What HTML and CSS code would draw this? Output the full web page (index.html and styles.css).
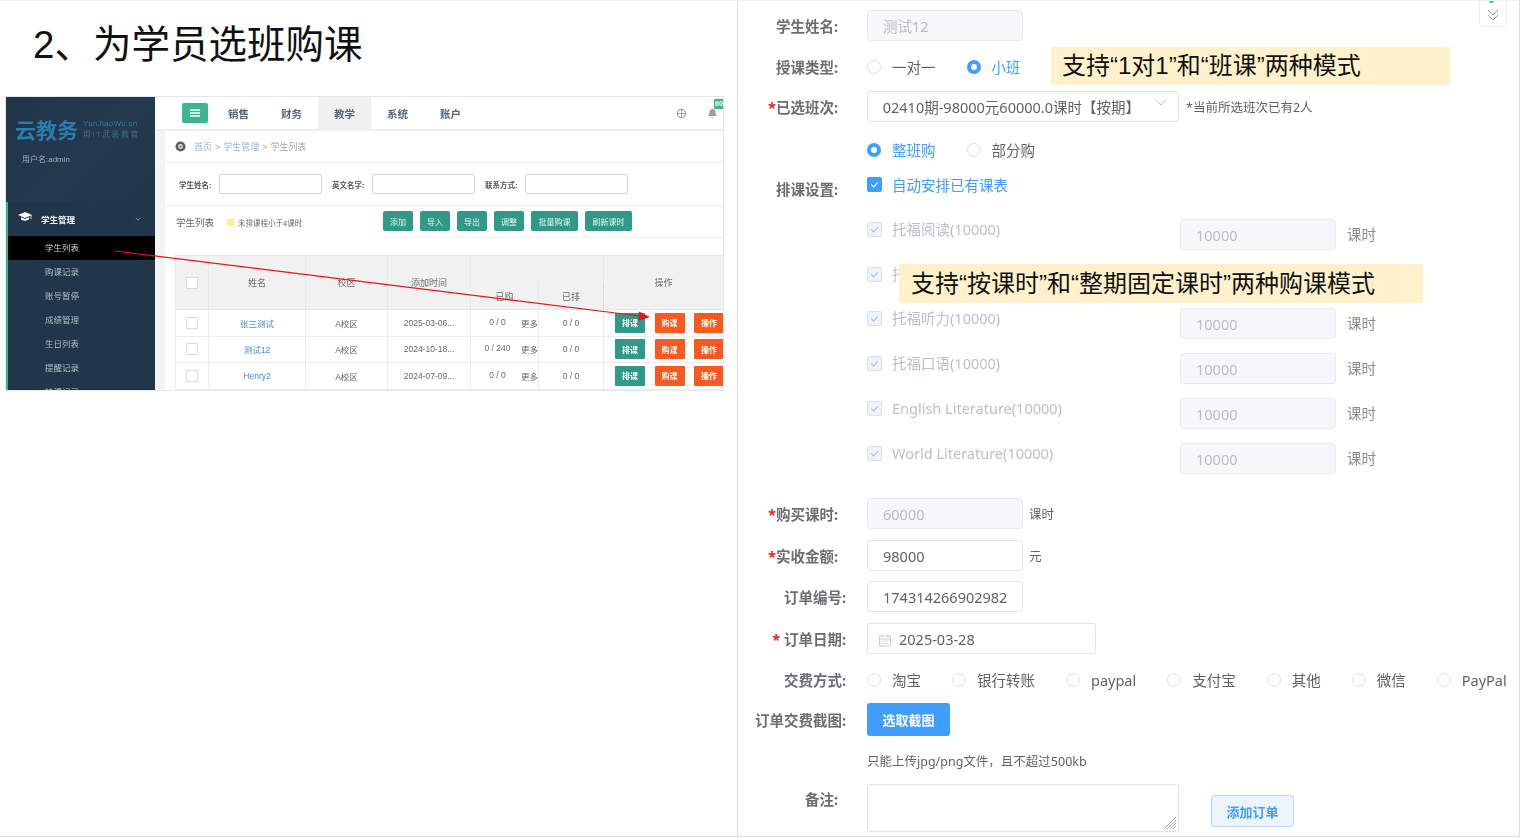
FILE: index.html
```html
<!DOCTYPE html>
<html lang="zh-CN">
<head>
<meta charset="utf-8">
<title>为学员选班购课</title>
<link rel="stylesheet" href="styles.css">
</head>
<body>
<div class="slide">
  <section class="left">
    <h1 class="title">2、为学员选班购课</h1>
    <div class="shot">
      <aside class="side">
        <div class="brand">
          <div class="logo">
            <span class="logo-main">云教务</span>
            <span class="logo-sub"><span class="logo-url">YunJiaoWu.cn</span><span class="logo-slogan">用IT武装教育</span></span>
          </div>
          <div class="user">用户名:admin</div>
        </div>
        <div class="menu">
          <div class="menu-head">
            <svg class="cap" viewBox="0 0 14 10"><path d="M0 3 7 0l7 3-7 3z" fill="#fff"/><path d="M3 5.2v2.4c2 1.4 6 1.4 8 0V5.2L7 7z" fill="#fff"/><path d="M13 3v4" stroke="#fff" stroke-width=".8"/></svg>
            <span class="menu-title">学生管理</span>
            <svg class="chev" viewBox="0 0 8 5"><path d="M1 1l3 3 3-3" fill="none" stroke="#9fb0bd" stroke-width="1"/></svg>
          </div>
          <div class="menu-item active">学生列表</div>
          <div class="menu-item">购课记录</div>
          <div class="menu-item">账号暂停</div>
          <div class="menu-item">成绩管理</div>
          <div class="menu-item">生日列表</div>
          <div class="menu-item">提醒记录</div>
          <div class="menu-item">转课记录</div>
        </div>
      </aside>
      <div class="main">
        <nav class="nav">
          <span class="burger"><svg viewBox="0 0 10 8" width="10" height="8"><path d="M0 1h10M0 4h10M0 7h10" stroke="#fff" stroke-width="1.3"/></svg></span>
          <span class="tab">销售</span>
          <span class="tab">财务</span>
          <span class="tab current">教学</span>
          <span class="tab">系统</span>
          <span class="tab">账户</span>
          <span class="nav-tools">
            <svg class="globe" viewBox="0 0 12 12"><circle cx="6" cy="6" r="4.5" fill="none" stroke="#9aa0a4" stroke-width="1.4"/><path d="M1 6h10M6 1v10" stroke="#9aa0a4" stroke-width="1"/></svg>
            <svg class="bell" viewBox="0 0 12 12"><path d="M6 1c2.4 0 3.4 1.8 3.4 4 0 2 .8 3 1.4 3.8H1.2C1.8 8 2.600 7 2.600 5c0-2.200 1-4 3.400-4zM4.800 10h2.400L6 11.500z" fill="#9aa0a4"/></svg>
            <span class="badge">60</span>
          </span>
        </nav>
        <div class="content">
          <div class="crumb">
            <svg class="pin" viewBox="0 0 12 12"><circle cx="6" cy="6" r="5.500" fill="#5a5f62"/><circle cx="6" cy="6" r="2.600" fill="#e8e8e8"/><circle cx="6" cy="6" r="1.200" fill="#5a5f62"/></svg>
            <span class="crumb-link">首页</span><span class="crumb-sep">&gt;</span><span class="crumb-link">学生管理</span><span class="crumb-sep">&gt;</span><span class="crumb-now">学生列表</span>
          </div>
          <div class="filter">
            <span class="f-label">学生姓名:</span><span class="f-input"></span>
            <span class="f-label">英文名字:</span><span class="f-input"></span>
            <span class="f-label">联系方式:</span><span class="f-input"></span>
          </div>
          <div class="toolbar">
            <span class="list-title">学生列表</span>
            <span class="legend"></span>
            <span class="legend-text">未排课程小于4课时</span>
            <span class="tools">
              <span class="t-btn">添加</span>
              <span class="t-btn">导入</span>
              <span class="t-btn">导出</span>
              <span class="t-btn">调整</span>
              <span class="t-btn wide">批量购课</span>
              <span class="t-btn wide">刷新课时</span>
            </span>
          </div>
          <table class="grid">
            <colgroup>
              <col class="c1"><col class="c2"><col class="c3"><col class="c4"><col class="c5"><col class="c6"><col class="c7">
            </colgroup>
            <thead>
              <tr>
                <th rowspan="2"><span class="box"></span></th>
                <th rowspan="2">姓名</th>
                <th rowspan="2">校区</th>
                <th rowspan="2">添加时间</th>
                <th colspan="2" class="blank"></th>
                <th rowspan="2" class="ops">操作</th>
              </tr>
              <tr><th>已购</th><th>已排</th></tr>
            </thead>
            <tbody>
              <tr>
                <td><span class="box"></span></td><td class="name">张三测试</td><td>A校区</td><td>2025-03-06...</td>
                <td><span class="bought"><span class="num">0 / 0</span><span>更多</span></span></td><td>0 / 0</td>
                <td class="ops"><span class="acts"><span class="a-btn teal">排课</span><span class="a-btn red">购课</span><span class="a-btn red">操作</span></span></td>
              </tr>
              <tr>
                <td><span class="box"></span></td><td class="name">测试12</td><td>A校区</td><td>2024-10-18...</td>
                <td><span class="bought"><span class="num">0 / 240</span><span>更多</span></span></td><td>0 / 0</td>
                <td class="ops"><span class="acts"><span class="a-btn teal">排课</span><span class="a-btn red">购课</span><span class="a-btn red">操作</span></span></td>
              </tr>
              <tr>
                <td><span class="box"></span></td><td class="name">Henry2</td><td>A校区</td><td>2024-07-09...</td>
                <td><span class="bought"><span class="num">0 / 0</span><span>更多</span></span></td><td>0 / 0</td>
                <td class="ops"><span class="acts"><span class="a-btn teal">排课</span><span class="a-btn red">购课</span><span class="a-btn red">操作</span></span></td>
              </tr>
            </tbody>
          </table>
        </div>
      </div>
      <svg class="arrow" viewBox="0 0 717 293" width="717" height="293"><path d="M109 154 634 219" stroke="#e8141c" stroke-width="1.200"/><path d="M644 220 633 214.500 632 224z" fill="#e8141c"/></svg>
    </div>
  </section>

  <section class="right">
    <div class="form">
      <div class="row">
        <div class="label">学生姓名:</div>
        <div class="field disabled w156">测试12</div>
      </div>
      <div class="row">
        <div class="label">授课类型:</div>
        <span class="opt"><i class="radio"></i>一对一</span>
        <span class="opt on"><i class="radio"></i>小班</span>
      </div>
      <div class="row">
        <div class="label"><span class="star">*</span>已选班次:</div>
        <div class="field select">
          <span class="select-text"><span>202410期-98000元60000.0课时【按期】</span></span>
          <svg class="sel-chev" viewBox="0 0 12 7"><path d="M1 1l5 5 5-5" fill="none" stroke="#c0c4cc" stroke-width="1"/></svg>
        </div>
        <span class="hint-side">*当前所选班次已有2人</span>
      </div>
      <div class="row">
        <div class="label"></div>
        <span class="opt on"><i class="radio"></i>整班购</span>
        <span class="opt"><i class="radio"></i>部分购</span>
      </div>
      <div class="row">
        <div class="label low">排课设置:</div>
        <span class="check-opt on"><i class="check"><svg viewBox="0 0 14 14"><path d="M3.500 7.200 6 9.700l4.500-5" fill="none" stroke="#fff" stroke-width="1.200"/></svg></i>自动安排已有课表</span>
      </div>
      <div class="row top">
        <div class="label"></div>
        <span class="check-opt off course"><i class="check"><svg viewBox="0 0 14 14"><path d="M3.500 7.200 6 9.700l4.500-5" fill="none" stroke="#b4b8be" stroke-width="1.200"/></svg></i>托福阅读(10000)</span>
        <div class="field disabled w156">10000</div><span class="unit">课时</span>
      </div>
      <div class="row top">
        <div class="label"></div>
        <span class="check-opt off course"><i class="check"><svg viewBox="0 0 14 14"><path d="M3.500 7.200 6 9.700l4.500-5" fill="none" stroke="#b4b8be" stroke-width="1.200"/></svg></i>托福写作(10000)</span>
        <div class="field disabled w156">10000</div><span class="unit">课时</span>
      </div>
      <div class="row top">
        <div class="label"></div>
        <span class="check-opt off course"><i class="check"><svg viewBox="0 0 14 14"><path d="M3.500 7.200 6 9.700l4.500-5" fill="none" stroke="#b4b8be" stroke-width="1.200"/></svg></i>托福听力(10000)</span>
        <div class="field disabled w156">10000</div><span class="unit">课时</span>
      </div>
      <div class="row top">
        <div class="label"></div>
        <span class="check-opt off course"><i class="check"><svg viewBox="0 0 14 14"><path d="M3.500 7.200 6 9.700l4.500-5" fill="none" stroke="#b4b8be" stroke-width="1.200"/></svg></i>托福口语(10000)</span>
        <div class="field disabled w156">10000</div><span class="unit">课时</span>
      </div>
      <div class="row top">
        <div class="label"></div>
        <span class="check-opt off course"><i class="check"><svg viewBox="0 0 14 14"><path d="M3.500 7.200 6 9.700l4.500-5" fill="none" stroke="#b4b8be" stroke-width="1.200"/></svg></i>English Literature(10000)</span>
        <div class="field disabled w156">10000</div><span class="unit">课时</span>
      </div>
      <div class="row top">
        <div class="label"></div>
        <span class="check-opt off course"><i class="check"><svg viewBox="0 0 14 14"><path d="M3.500 7.200 6 9.700l4.500-5" fill="none" stroke="#b4b8be" stroke-width="1.200"/></svg></i>World Literature(10000)</span>
        <div class="field disabled w156">10000</div><span class="unit">课时</span>
      </div>
      <div class="row">
        <div class="label"><span class="star">*</span>购买课时:</div>
        <div class="field disabled w156">60000</div><span class="unit-small">课时</span>
      </div>
      <div class="row">
        <div class="label"><span class="star">*</span>实收金额:</div>
        <div class="field w156">98000</div><span class="unit-small">元</span>
      </div>
      <div class="row">
        <div class="label wide">订单编号:</div>
        <div class="field w156"><span class="clip">174314266902982</span></div>
      </div>
      <div class="row">
        <div class="label wide"><span class="star">*</span> 订单日期:</div>
        <div class="field date">
          <svg class="cal" viewBox="0 0 14 14"><path d="M1.500 3h11v10h-11zM1.500 6h11M4 1v3M10 1v3" fill="none" stroke="#c8ccd2" stroke-width="1"/><path d="M3.500 8h7M3.500 10.500h7" stroke="#dcdfe4" stroke-width="1"/></svg>
          2025-03-28
        </div>
      </div>
      <div class="row">
        <div class="label wide">交费方式:</div>
        <span class="opt"><i class="radio"></i>淘宝</span>
        <span class="opt"><i class="radio"></i>银行转账</span>
        <span class="opt"><i class="radio"></i>paypal</span>
        <span class="opt"><i class="radio"></i>支付宝</span>
        <span class="opt"><i class="radio"></i>其他</span>
        <span class="opt"><i class="radio"></i>微信</span>
        <span class="opt last"><i class="radio"></i>PayPal</span>
      </div>
      <div class="row">
        <div class="label wide">订单交费截图:</div>
        <span class="primary">选取截图</span>
      </div>
      <div class="row">
        <div class="label"></div>
        <span class="hint">只能上传jpg/png文件，且不超过500kb</span>
      </div>
      <div class="row top">
        <div class="label note-label">备注:</div>
        <div class="note">
          <svg class="grip" viewBox="0 0 14 14"><path d="M13 1 1 13M13 4 4 13M13 7l-6 6M13 10l-3 3" stroke="#8f8f8f" stroke-width=".8"/></svg>
        </div>
        <span class="plain">添加订单</span>
      </div>
    </div>
    <div class="callout first">支持“1对1”和“班课”两种模式</div>
    <div class="callout second">支持“按课时”和“整期固定课时”两种购课模式</div>
    <div class="scroll-btn">
      <i class="dot"></i>
      <svg viewBox="0 0 12 14" width="12" height="14"><path d="M1 2l5 5 5-5M1 7l5 5 5-5" fill="none" stroke="#8f939a" stroke-width="1"/></svg>
    </div>
  </section>
</div>
</body>
</html>
```

FILE: styles.css
```css
* { box-sizing: border-box; }
html, body { margin: 0; padding: 0; background: #fff; overflow: hidden; }
body {
  width: 1521px;
  height: 838px;
  font-family: "Noto Sans", "Noto Sans CJK SC", sans-serif;
}
i { display: block; font-style: normal; }

.slide {
  display: flex;
  width: 1520px;
  height: 837px;
  border-top: 1px solid #f2f2f2;
  border-bottom: 1px solid #dedede;
  border-right: 1px solid #dedede;
}

/* ---------- left half ---------- */
.left {
  width: 738px;
  flex: none;
  border-right: 1px solid #dedede;
}
.title {
  margin: 0;
  height: 95px;
  padding: 21px 0 0 33px;
  font: 400 38.500px/46px "Liberation Sans", "Noto Sans CJK SC", sans-serif;
  color: #111;
}
.shot {
  position: relative;
  display: flex;
  width: 719px;
  height: 295px;
  margin-left: 5px;
  border: 1px solid #e6e6e6;
  overflow: hidden;
  background: #fff;
  color: #666;
  font-family: "Liberation Sans", "Noto Sans CJK SC", sans-serif;
  filter: blur(.45px);
}
.side {
  width: 149px;
  flex: none;
  background: #22364a;
}
.brand {
  height: 105px;
  padding: 21px 0 0 9px;
  background: linear-gradient(135deg, #20344a 0%, #263a4e 55%, #20344a 100%);
}
.logo { display: flex; align-items: center; gap: 5px; height: 22px; }
.logo-main { font-size: 21px; font-weight: 700; color: #2a7cab; white-space: nowrap; }
.logo-sub { display: flex; flex-direction: column; gap: 2px; }
.logo-url { font-size: 8px; line-height: 9px; color: #2a7cab; letter-spacing: .3px; white-space: nowrap; }
.logo-slogan { font-size: 7.500px; line-height: 9px; color: #3f6f8f; letter-spacing: 1.800px; white-space: nowrap; }
.user { margin: 14px 0 0 7px; font-size: 8px; line-height: 12px; color: #a4afb8; }
.menu { border-left: 2px solid #37b58f; }
.menu-head {
  display: flex;
  align-items: center;
  height: 34px;
  padding: 0 14px 0 10px;
}
.cap { width: 14px; height: 10px; margin-top: -4px; }
.menu-title { margin-left: 9px; font-size: 8.500px; font-weight: 700; color: #f2f4f5; flex: 1; }
.chev { width: 6px; height: 4px; }
.menu-item {
  height: 24px;
  padding-left: 37px;
  font-size: 8.500px;
  line-height: 24px;
  color: #b4bec6;
}
.menu-item.active { background: #000; color: #cfd4d8; }

.main { flex: 1; min-width: 0; display: flex; flex-direction: column; background: #f3f4f4; }
.nav {
  display: flex;
  align-items: center;
  height: 34px;
  flex: none;
  padding-left: 27px;
  background: #fff;
  border-bottom: 2px solid #edf0f0;
}
.burger {
  display: flex;
  align-items: center;
  justify-content: center;
  width: 26px;
  height: 20px;
  margin-right: 4px;
  border-radius: 2px;
  background: #3bb592;
}
.tab {
  display: flex;
  align-items: center;
  justify-content: center;
  width: 53px;
  height: 32px;
  font-size: 10.500px;
  font-weight: 700;
  color: #56687a;
}
.tab.current { background: #f0f0f0; }
.nav-tools {
  position: relative;
  display: flex;
  align-items: center;
  flex: 1;
  justify-content: flex-end;
  gap: 20px;
  padding-right: 5px;
  height: 32px;
}
.globe, .bell { width: 11px; height: 11px; }
.badge {
  position: absolute;
  right: 0;
  top: 2px;
  width: 9px;
  height: 10px;
  overflow: hidden;
  background: #3bb592;
  color: #fff;
  font-size: 7px;
  font-weight: 700;
  line-height: 10px;
  border-radius: 1px 0 0 1px;
  padding-left: 1px;
}
.content {
  flex: 1;
  margin-left: 10px;
  background: #fff;
}
.crumb {
  display: flex;
  align-items: center;
  height: 32px;
  padding-left: 10px;
  border-bottom: 1px solid #ececec;
  font-size: 9px;
  color: #a8a8a8;
}
.pin { width: 11px; height: 11px; margin-right: 8px; }
.crumb-link { color: #8fb9da; }
.crumb-sep { margin: 0 3px; }
.filter {
  display: flex;
  align-items: center;
  height: 43px;
  padding-left: 14px;
  border-bottom: 1px solid #ececec;
}
.f-label { width: 40px; font-size: 7.500px; font-weight: 700; color: #555; white-space: nowrap; }
.f-input {
  width: 103px;
  height: 20px;
  margin-right: 10px;
  border: 1px solid #d6d6d6;
  border-radius: 2px;
}
.toolbar {
  display: flex;
  align-items: center;
  height: 32px;
  padding-left: 11px;
}
.list-title { width: 51px; font-size: 9.500px; color: #666; }
.legend { width: 7px; height: 7px; margin-right: 4px; background: #fdf28d; }
.legend-text { width: 145px; font-size: 7.500px; color: #666; }
.tools {
  display: flex;
  align-items: center;
  gap: 7px;
  height: 32px;
  flex: 1;
  padding-bottom: 1px;
  border-bottom: 1px solid #eee;
}
.t-btn {
  display: flex;
  align-items: center;
  justify-content: center;
  width: 30px;
  height: 20px;
  border-radius: 2px;
  background: #2f9a87;
  color: #e6f3f0;
  font-size: 8px;
}
.t-btn.wide { width: 47px; }
.grid {
  width: 548px;
  margin: 17px 0 0 10px;
  border-collapse: collapse;
  table-layout: fixed;
  font-size: 8.500px;
  text-align: center;
}
.c1 { width: 33px; }
.c2 { width: 97px; }
.c3 { width: 82px; }
.c4 { width: 83px; }
.c5 { width: 68px; }
.c6 { width: 65px; }
.c7 { width: 120px; }
.grid th {
  height: 27px;
  padding: 0;
  background: #f1f1f1;
  border: 1px solid #e8e8e8;
  font-size: 9px;
  font-weight: 400;
  color: #6d6d6d;
}
.grid th.blank { border-bottom-color: #f1f1f1; }
.grid td {
  height: 26.500px;
  padding: 0;
  border: 1px solid #ededed;
  color: #666;
}
.grid .ops { border-left: 1px solid #dcdcdc; }
.box {
  display: inline-block;
  width: 12px;
  height: 12px;
  background: #fff;
  border: 1px solid #dcdcdc;
  vertical-align: middle;
}
.name { color: #3f8fca !important; }
.bought { display: flex; justify-content: flex-end; gap: 0; }
.num { flex: 1; text-align: center; padding-left: 8px; padding-right: 5px; white-space: nowrap; }
.acts { display: flex; gap: 9.500px; padding-left: 11px; width: 120px; overflow: hidden; }
.a-btn {
  display: flex;
  align-items: center;
  justify-content: center;
  width: 30px;
  height: 20px;
  flex: none;
  color: #fff;
  font-size: 8px;
  font-weight: 700;
  border-radius: 1px;
}
.teal { background: #2f9a87; }
.red { background: #f8591f; }
.arrow { position: absolute; left: 0; top: 0; pointer-events: none; }

/* ---------- right half ---------- */
.right { position: relative; flex: 1; min-width: 0; overflow: hidden; }
.form {
  display: grid;
  grid-template-rows: 41px 40px 43px 35px 50px 45px 44px 45px 45px 45px 55px 42px 41px 42px 41px 40px 41px 39px 50px;
  padding-top: 9px;
  color: #606266;
  font-size: 14.500px;
  filter: blur(.35px);
}
.row { display: flex; align-items: center; height: 31px; white-space: nowrap; }
.row.top { align-items: flex-start; }
.label {
  width: 108px;
  flex: none;
  margin-right: 21px;
  padding-right: 8px;
  text-align: right;
  font-size: 14.500px;
  font-weight: 700;
  color: #6a6d72;
}
.label.wide { padding-right: 0; }
.label.low { margin-top: 7px; }
.note-label { line-height: 31px; }
.star { color: #f01919; }

.field {
  display: flex;
  align-items: center;
  height: 31px;
  padding: 0 15px;
  border: 1px solid #dfe3ea;
  border-radius: 3px;
  background: #fff;
  color: #606266;
}
.w156 { width: 156px; flex: none; }
.disabled { background: #f5f7fa; border-color: #e8ebf0; color: #b9bdc4; }
.clip { display: block; overflow: hidden; }
.select { position: relative; width: 312px; flex: none; padding: 0 38px 0 15px; }
.select-text { display: flex; justify-content: flex-end; width: 259px; overflow: hidden; }
.select-text span { flex: none; }
.sel-chev { position: absolute; right: 11px; top: 7px; width: 12px; height: 7px; }
.hint-side { margin-left: 7px; font-size: 12.500px; color: #606266; }
.date { width: 229px; flex: none; padding-left: 10px; }
.cal { width: 14px; height: 14px; margin-right: 7px; margin-top: 2px; }

.opt { display: flex; align-items: center; margin-right: 31px; color: #606266; }
.opt.last { margin-right: 0; }
.radio {
  width: 14px;
  height: 14px;
  margin-right: 11px;
  border: 1px solid #dcdfe6;
  border-radius: 50%;
  background: #fff;
}
.opt.on { color: #409eff; }
.opt.on .radio { border: 4.500px solid #409eff; }

.check-opt { display: flex; align-items: center; line-height: 20px; }
.check {
  width: 15px;
  height: 15px;
  margin-right: 10px;
  border: 1px solid #dcdfe6;
  border-radius: 2px;
}
.check svg { display: block; width: 13px; height: 13px; }
.check-opt.on { color: #409eff; }
.check-opt.on .check { background: #409eff; border-color: #409eff; }
.check-opt.off { color: #bcc0c6; }
.check-opt.off .check { background: #edf2fc; }
.course { width: 313px; flex: none; }
.unit { margin-left: 11px; line-height: 31px; color: #8b8e93; }
.unit-small { margin-left: 6px; font-size: 12.500px; color: #606266; }

.primary {
  display: flex;
  align-items: center;
  justify-content: center;
  width: 83px;
  height: 33px;
  border-radius: 3px;
  background: #409eff;
  color: #fff;
  font-size: 13px;
  font-weight: 700;
}
.hint { font-size: 12.500px; color: #606266; }
.note {
  position: relative;
  width: 312px;
  height: 48px;
  flex: none;
  border: 1px solid #dfe3ea;
  border-radius: 3px;
}
.grip { position: absolute; right: 1px; bottom: 1px; width: 14px; height: 14px; }
.plain {
  display: flex;
  align-items: center;
  justify-content: center;
  width: 83px;
  height: 32px;
  margin: 11px 0 0 32px;
  border: 1px solid #b3d8ff;
  border-radius: 3px;
  background: #ecf5ff;
  color: #409eff;
  font-size: 13px;
  font-weight: 700;
}

.callout {
  position: absolute;
  display: flex;
  align-items: center;
  background: #fff1cc;
  color: #111;
  font: 400 24px/1 "Liberation Sans", "Noto Sans CJK SC", sans-serif;
  white-space: nowrap;
}
.callout.first { left: 313px; top: 46px; width: 399px; height: 38px; padding-left: 11px; }
.callout.second { left: 161px; top: 263px; width: 524px; height: 39px; padding-left: 12px; }

.scroll-btn {
  position: absolute;
  left: 741px;
  top: -4px;
  display: flex;
  justify-content: center;
  align-items: flex-end;
  width: 28px;
  height: 30px;
  padding-bottom: 4px;
  border: 1px solid #ececec;
  border-radius: 0 0 4px 4px;
}
.dot {
  position: absolute;
  left: 9px;
  top: 0;
  width: 5px;
  height: 5px;
  border-radius: 50%;
  background: #2fc27a;
}
```
